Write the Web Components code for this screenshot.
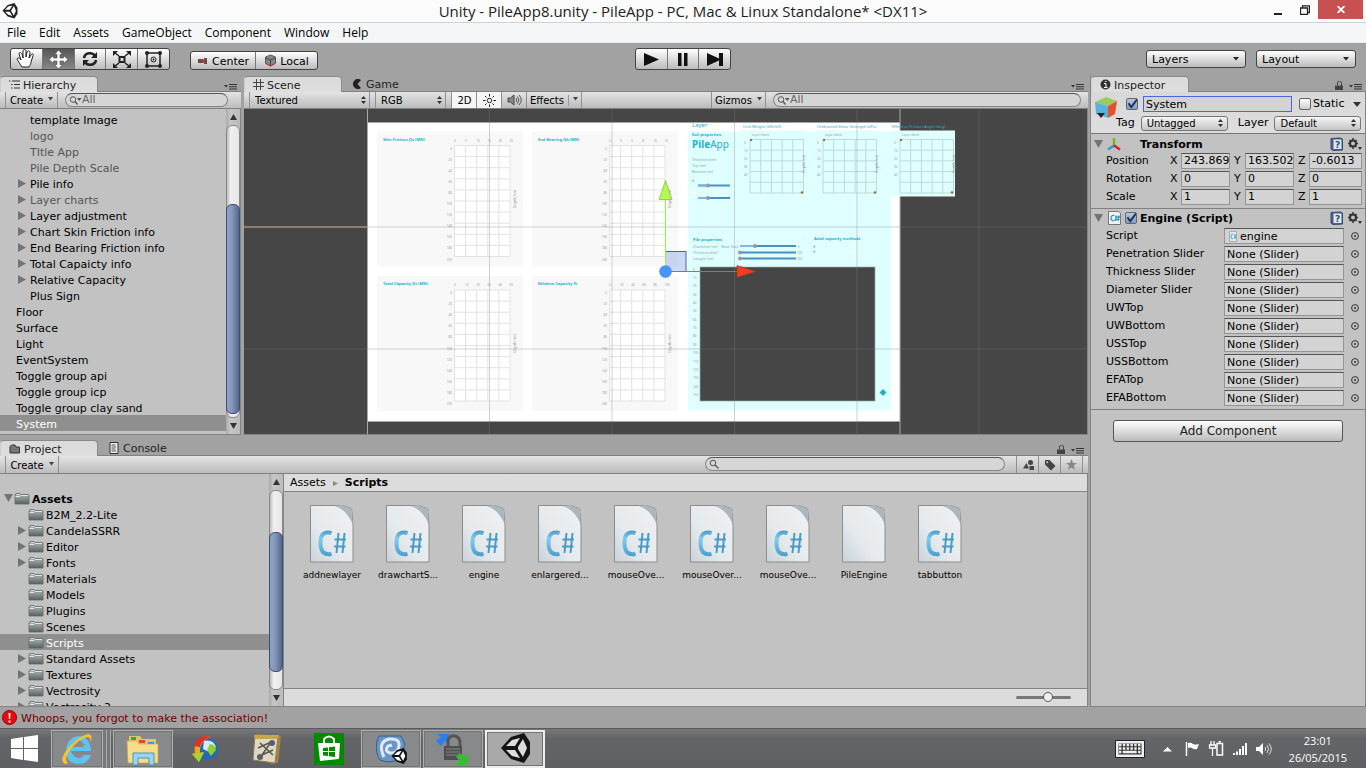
<!DOCTYPE html>
<html lang="en">
<head>
<meta charset="utf-8">
<title>Unity - PileApp8.unity</title>
<style>
html,body{margin:0;height:100%}
body{font:11px/16px "DejaVu Sans",Verdana,sans-serif;color:#000;background:#a2a2a2;overflow:hidden}
</style>
</head>
<body>
<unity-editor></unity-editor>
<script>
const base = `*{box-sizing:border-box}
button,select,input{font:inherit;color:inherit;margin:0;padding:0;border:0;background:none;border-radius:0;outline:0;appearance:none;-webkit-appearance:none;min-width:0}
button{display:flex;align-items:center;white-space:nowrap}
svg{display:block;flex:none}
.lb{padding-top:2px}
:host([hidden]){display:none}`;

function define(name, css, html) {
  customElements.define(name, class extends HTMLElement {
    connectedCallback() {
      if (this.shadowRoot) return;
      const root = this.attachShadow({ mode: 'open' });
      root.innerHTML = `<style>${base}${css}</style>` + (typeof html === 'function' ? html(this) : html);
    }
  });
}
const svg = (w, h, body, vb) => `<svg width="${w}" height="${h}" viewBox="${vb || `0 0 ${w} ${h}`}" aria-hidden="true">${body}</svg>`;
const unityShape = (line, face) => `<path fill="${line}" d="M1 15 11 4 24 0 30 9 30 21 24 30 11 26Z"/><path fill="${face}" d="M6 13 12 7 20 5 15 13ZM6 17 15 17 20 25 12 23ZM18 14 23 6 27 15 23 24 18 16Z"/>`;

const icons = {
  unity: svg(16, 16, unityShape('#222', '#fff'), '0 0 31 31'),
  hand: svg(20, 20, '<path d="M6 18C4 15 2 12 1 10c1-2 3-1 4 1L3 5c0-2 2-2 3 0l1 4V2c0-2 3-2 3 0v6l1-5c1-2 3-1 3 1l-1 5 2-3c1-2 3-1 2 1l-2 6c0 2-1 3-2 5Z" fill="#fff" stroke="#222"/>'),
  move: svg(19, 19, '<path fill="#fff" stroke="#444" stroke-width=".6" d="m9.500 0 4 4.500H11V8h3.500V5.500l4.500 4-4.500 4V11H11v3.500h2.500l-4 4.500-4-4.500H8V11H4.500v2.500L0 9.500l4.500-4V8H8V4.500H5.500Z"/>'),
  rotate: svg(16, 16, '<path d="M2 7C3 1 11 1 13 5M14 9C13 15 5 15 3 11" fill="none" stroke="#222" stroke-width="2.600"/><path d="M15 1v6H9ZM1 15V9h6Z" fill="#222"/>'),
  scale: svg(18, 17, '<path d="M6.500 6h5v5h-5z" fill="none" stroke="#222" stroke-width="2"/><path d="M2 2l4 3M16 2l-4 3M2 15l4-3M16 15l-4-3" stroke="#222" stroke-width="1.500"/><path d="M0 0h5L0 5ZM18 0v5l-5-5ZM0 17v-5l5 5ZM18 17h-5l5-5Z" fill="#222"/>'),
  rect: svg(17, 17, '<path d="M2 2h13v13H2z" fill="none" stroke="#222" stroke-width="1.500"/><g fill="#222"><circle cx="2" cy="2" r="2"/><circle cx="15" cy="2" r="2"/><circle cx="2" cy="15" r="2"/><circle cx="15" cy="15" r="2"/><circle cx="8.500" cy="8.500" r="1"/></g><circle cx="8.500" cy="8.500" r="2.500" fill="none" stroke="#222"/>'),
  pivot: svg(12, 10, '<path fill="#555" d="M1 3h5v4H1zM7 2h3v6H7z"/><circle cx="6" cy="5" r="1.800" fill="#d22"/>'),
  cube: svg(13, 13, '<path fill="#888" stroke="#555" d="m6.500 1 5 2v6l-5 3-5-3V3Z"/><path d="m2 4 4.500 2L11 4M6.500 6v6" stroke="#444" fill="none"/><path d="M1.500 9.500 6.500 12l5-2.500" stroke="#c33" fill="none"/>'),
  play: svg(15, 13, '<path fill="#111" d="M0 0l15 6.500L0 13Z"/>'),
  pause: svg(10, 13, '<path fill="#111" d="M0 0h3.500v13H0zM6 0h3.500v13H6z"/>'),
  step: svg(16, 13, '<path fill="#111" d="M0 0l12 5.500V0h4v13h-4V7.500L0 13Z"/>'),
  list: svg(11, 9, '<path d="M0 1h1.500M3 1h8M2 4.500h1.500M5 4.500h6M2 8h1.500M5 8h6" stroke="#333"/>'),
  grid: svg(11, 11, '<path d="M3.500 0v11M7.500 0v11M0 3.500h11M0 7.500h11" stroke="#444"/>'),
  game: svg(9, 10, '<path fill="#222" d="M8 1A5 5 0 1 0 8 9L4.500 5Z"/>'),
  info: svg(11, 11, '<circle cx="5.500" cy="5.500" r="5" fill="#333"/><path d="M4 4.500h2v4M4 8.500h3.500M5 2.500h1.500" stroke="#fff" fill="none"/>'),
  foldertab: svg(12, 10, '<path d="M1 9V2.500L2.500 1H6l1 2h3.500v6Z" fill="#777" stroke="#333"/>'),
  console: svg(10, 12, '<path d="M1 .5h8v11H1z" fill="#eee" stroke="#333"/><path d="M2.500 3h4M2.500 5h4.500M2.500 7h4M2.500 9h4.500" stroke="#555"/>'),
  menu: svg(13, 6, '<path fill="#333" d="M0 1h4L2 3.500ZM5 0h8v1H5zM5 2.300h8v1H5zM5 4.600h8v1H5z"/>'),
  lock: svg(8, 9, '<path d="M2.500 4V2a1.800 1.800 0 0 1 4 0v3" fill="none" stroke="#444"/><path fill="#444" d="M0 4.500h8V9H0z"/>'),
  sun: svg(13, 13, '<circle cx="6.500" cy="6.500" r="2.200" fill="none" stroke="#222"/><path d="M6.500 0v2.500M6.500 10.500V13M0 6.500h2.500M10.500 6.500H13M2 2l1.500 1.500M9.500 9.500 11 11M11 2 9.500 3.500M2 11l1.500-1.500" stroke="#222"/>'),
  audio: svg(15, 12, '<path d="M1 4h2.500L7 1v10L3.500 8H1Z" fill="#888" stroke="#444"/><path d="M9 4q1.500 2 0 4M10.500 2.500q3 3.500 0 7M12 1q4.500 5 0 10" fill="none" stroke="#555"/>'),
  find: svg(10, 10, '<circle cx="4" cy="4" r="2.800" fill="none" stroke="#555"/><path d="m6 6 3.500 3.500" stroke="#555" stroke-width="1.300"/>'),
  findmenu: svg(13, 10, '<circle cx="4" cy="4.500" r="2.800" fill="none" stroke="#555"/><path d="m6 6.500 2.500 3" stroke="#555" stroke-width="1.300"/><path fill="#555" d="M8 3h4.500L10.200 6Z"/>'),
  shapes: svg(11, 10, '<circle cx="7.500" cy="2.500" r="2.500" fill="#444"/><path fill="#444" d="M0 8.500 3.500 3 6 8.500ZM6.500 6H11v4H6.500z"/>'),
  tag: svg(12, 12, '<path fill="#444" fill-rule="evenodd" d="M1 1h4.500L11.500 7 7 11.500 1 5.500ZM2.300 3.200a1 1 0 1 0 2 0a1 1 0 1 0-2 0"/>'),
  star: svg(11, 11, '<path fill="#888" d="m5.500 0 1.500 3.900 4 .1-3.200 2.600 1.200 4.200-3.500-2.400L2 10.800l1.200-4.200L0 4l4-.1Z"/>'),
  folder: svg(16, 13, '<defs><linearGradient id="f" x2="0" y2="1"><stop offset="0" stop-color="#a9b0b0"/><stop offset=".5" stop-color="#87908f"/><stop offset="1" stop-color="#56605f"/></linearGradient></defs><path d="M1 12V3q0-1 1-1V1.500h4l1 1h7q1 0 1 1V12Z" fill="url(#f)" stroke="#626a6b" stroke-width=".8"/><path d="M1.500 4.500H6l1-1h7" stroke="#e3e7e7" fill="none"/><path d="M2.500 2.500H6" stroke="#d8dcdc"/>'),
  goCube: svg(24, 26, '<path fill="#9dca5f" d="M1 6 12 1l11 4-9 5Z"/><path fill="#58b2dc" d="m1 6 13 4v12L2 18Z"/><path fill="#e5512a" d="m14 10 9-5-2 13-7 4Z"/><path fill="#222" d="M3 17h8l-4 5Z"/>'),
  transform: svg(14, 13, '<path d="M7 0v8" stroke="#7ab51d" stroke-width="2.500"/><path d="m7 7.500-6 4" stroke="#3497d1" stroke-width="2.500"/><path d="m7 7.500 6 4" stroke="#d3202a" stroke-width="2.500"/>'),
  help: svg(13, 14, '<path fill="#49638c" stroke="#334a70" d="M1 1.500 10 1l2.500 1v11L3 13.500 1 12Z"/><path fill="#dfe6ee" d="M3.500 2.500h8v9.500h-8z"/><text x="5" y="10.500" font-size="9" font-weight="700" font-family="DejaVu Sans" fill="#2c4a78">?</text>'),
  gear: svg(14, 12, '<circle cx="5" cy="5.500" r="3" fill="none" stroke="#333" stroke-width="2"/><path d="M5 0v2M5 9v2M0 5.500h2M8 5.500h2M1.500 2 3 3.500M7 7.500 8.500 9M8.500 2 7 3.500M3 7.500 1.500 9" stroke="#333" stroke-width="1.500"/><path fill="#333" d="M10 9h4l-2 3Z"/>'),
  csSmall: svg(13, 14, '<path d="M.5.5h10L12.500 2v11.500H.5Z" fill="#eef2f5" stroke="#777"/><path d="M6.500 4.500Q3 4 3 7t3.500 3M8.500 4.500 7.500 10M11 4.500 10 10M7 6.200h5M6.500 8.500h5" fill="none" stroke="#2f90c4" stroke-width="1.200"/>'),
  ring: svg(8, 8, '<circle cx="4" cy="4" r="3.400" fill="none" stroke="#333"/><circle cx="4" cy="4" r="1" fill="#333"/>')
};
const caret = svg(6, 4, '<path fill="#222" d="M0 0h6L3 3.500Z"/>');

define('u-icon', `:host{display:inline-flex;flex:none}`, el => icons[el.getAttribute('name')]);

define('title-bar', `:host{display:grid;grid-template-columns:110px 1fr 110px;height:23px;background:#fcfcfc;border-bottom:1px solid #d0d3d6;font:15px/22px "Open Sans",sans-serif;color:#222}
.logo{padding:3px 2px}.t{text-align:center;white-space:nowrap}.w{display:flex;justify-content:flex-end;padding-right:3px}
.w button{height:19px;width:27px;justify-content:center}.w .x{width:45px;background:#c75050}`,
`<div class="logo">${icons.unity}</div><div class="t">Unity - PileApp8.unity - PileApp - PC, Mac &amp; Linux Standalone* &lt;DX11&gt;</div>
<div class="w"><button aria-label="Minimize">${svg(8, 10, '<path d="M0 8h8v2H0z" fill="#222"/>')}</button><button aria-label="Restore">${svg(10, 10, '<path d="M.5 3h7v6.500h-7zM2.500 3V.8h7V7.500H8" fill="none" stroke="#222" stroke-width="1.300"/>')}</button><button class="x" aria-label="Close">${svg(8, 7, '<path d="m.5 0 7 7M7.500 0l-7 7" stroke="#fff" stroke-width="1.800"/>')}</button></div>`);

define('menu-bar', `:host{display:flex;height:20px;background:#f5f6f7;border-bottom:1px solid #e8e9ea;font:12px/19px "Open Sans",sans-serif;padding-left:7px;gap:13px}`,
  ['File', 'Edit', 'Assets', 'GameObject', 'Component', 'Window', 'Help'].map(t => `<button>${t}</button>`).join(''));

define('tool-bar', `:host{display:grid;grid-template-columns:1fr auto 1fr;height:32px;padding:0 10px}
.g{display:flex;border:1px solid #444;border-radius:3px;overflow:hidden;background:linear-gradient(#fff,#bbb)}
.g button{justify-content:center;border-left:1px solid #777}.g button:first-child{border:0}
.tools{height:22px;width:160px}.tools button{flex:1}.tools .on{background:linear-gradient(#555,#888)}
.left,.right{display:flex;align-items:flex-start;padding-top:5px}
.piv{height:19px;margin:3px 0 0 20px}.piv button{gap:3px;padding:0 4px;width:64px}.piv button+button{width:62px}
.play{height:22px;width:96px;margin-top:5px}.play button{flex:1}
.right{justify-content:flex-end;gap:10px;padding-top:7px}
label{position:relative;width:100px;height:18px}
select{width:100%;height:18px;border:1px solid #444;border-radius:3px;background:linear-gradient(#fff,#bbb);padding:1px 0 0 5px;font-size:11px}
label svg{position:absolute;right:7px;top:7px}`,
`<div class="left"><div class="g tools">${['hand', 'move', 'rotate', 'scale', 'rect'].map(n => `<button aria-label="${n}" class="${n === 'move' ? 'on' : ''}">${icons[n]}</button>`).join('')}</div>
<div class="g piv"><button>${icons.pivot}<span class="lb">Center</span></button><button>${icons.cube}<span class="lb">Local</span></button></div></div>
<div class="g play"><button aria-label="Play">${icons.play}</button><button aria-label="Pause">${icons.pause}</button><button aria-label="Step">${icons.step}</button></div>
<div class="right">${['Layers', 'Layout'].map(t => `<label><select aria-label="${t}"><option>${t}</option></select>${caret}</label>`).join('')}</div>`);

define('dock-panel', `:host{display:flex;flex-direction:column;min-width:0;min-height:0}
.tabs{display:flex;height:17px;padding-top:1px;border-bottom:1px solid #808080}
.opt{margin-left:auto;display:flex;align-items:flex-end;gap:6px;padding:0 4px 1px 0}
.body{flex:1;min-height:0;display:flex;background:#c2c2c2;border-right:1px solid #848484;border-bottom:1px solid #848484}`,
el => `<div class="tabs"><slot name="tab"></slot><div class="opt">${el.hasAttribute('lock') ? icons.lock : ''}${icons.menu}</div></div><slot name="bar"></slot><div class="body"><slot></slot></div>`);

define('dock-tab', `:host{display:block;width:98px;height:15px}
button{width:100%;height:16px;gap:4px;padding-left:11px;color:#222;font-size:11px}
:host([active]) button{padding-left:8px;gap:3px;background:linear-gradient(#dadada,#dedede);border:1px solid #8a8a8a;border-bottom:0;border-left-color:#ccc;border-radius:4px 4px 0 0}`,
el => `<button role="tab">${icons[el.getAttribute('icon')]}<span class="lb"><slot></slot></span></button>`);

define('strip-bar', `:host{display:flex;height:17px;background:linear-gradient(#e4e4e4,#bcbcbc);border-bottom:1px solid #808080;padding-left:5px;align-items:stretch;font-size:10px;flex:none}
:host([tall]){height:18px}`, `<slot></slot>`);

define('strip-button', `:host{display:flex;border-left:1px solid #909090;margin-right:-1px}
button{width:100%;padding:0 5px;gap:5px;font-size:10px;justify-content:center}
:host([end]) {border-right:1px solid #909090;margin-right:0}
:host([on]) button{background:#f6f6f6}:host([split]) button{gap:4px}`,
el => `<button aria-label="${el.getAttribute('label') || el.textContent}">${el.getAttribute('icon') ? icons[el.getAttribute('icon')] : '<span class="lb"><slot></slot></span>'}${el.hasAttribute('split') ? svg(1, 11, '<path fill="#999" d="M0 0h1v11H0z"/>') : ''}${el.hasAttribute('drop') ? svg(5, 8, '<path fill="#444" d="M0 1h5L2.500 4.500Z"/>') : ''}</button>`);

define('strip-select', `:host{display:block;position:relative;border:solid #909090;border-width:0 1px}
select{width:100%;height:16px;padding:1px 0 0 5px;font-size:10px}svg{position:absolute;right:3px;top:4px}`,
el => `<select aria-label="${el.getAttribute('value')}"><option>${el.getAttribute('value')}</option></select>${svg(5, 8, '<path fill="#333" d="M0 3 2.500 0 5 3ZM0 5h5L2.500 8Z"/>')}`);

define('search-box', `:host{display:flex;align-items:center;height:14px;margin-top:1px;border:1px solid #858585;border-top-color:#555;border-radius:7px;background:#d6d6d6;padding-left:3px;overflow:hidden}
input{flex:1;height:12px;font-size:11px;line-height:12px}input::placeholder{color:#666;opacity:1}`,
el => `${el.hasAttribute('plain') ? icons.find : icons.findmenu}<input type="text" aria-label="Search" placeholder="${el.getAttribute('text') || ''}">`);

define('scroll-bar', `:host{display:flex;flex-direction:column;flex:none;width:14px;background:linear-gradient(90deg,#aaa,#c6c6c6 30%,#bbb)}
.b{height:16px;display:flex;align-items:center;justify-content:center}
.t{flex:1;display:flex;flex-direction:column;background:linear-gradient(90deg,#bbb,#f0f0f0 30%,#e6e6e6);border-radius:6px;border:1px solid #888}
.th{border-radius:6px;border:1px solid #3e4d70;background:linear-gradient(90deg,#91a1c4,#8597bb 40%,#56678c);margin:0 -1px}`,
el => { const [a, b, c] = el.getAttribute('split').split(' ');
  return `<button class="b" aria-label="Scroll up">${svg(7, 6, '<path fill="#333" d="M0 6 3.500 0 7 6Z"/>')}</button><div class="t"><div style="flex:${a}"></div><div class="th" style="flex:${b}"></div><div style="flex:${c}"></div></div><button class="b" aria-label="Scroll down">${svg(7, 6, '<path fill="#333" d="M0 0h7L3.500 6Z"/>')}</button>`; });

define('tree-row', `:host{display:flex;align-items:center;height:16px;line-height:16px;font-size:11px;white-space:nowrap;gap:2px;padding-left:2px;flex:none}
:host([in]){padding-left:16px}:host([dim]){color:#555}:host([sel]){background:#8f8f8f;color:#fff}:host([bold]){font-weight:700}
.a{width:12px;display:flex;justify-content:center}:host([folder]){gap:0}u-icon{margin-right:2px}.lb{padding-top:3px}`,
el => `<span class="a">${el.hasAttribute('closed') ? svg(8, 9, '<path fill="#747474" d="M0 0 8 4.500 0 9Z"/>') : el.hasAttribute('open') ? svg(9, 8, '<path fill="#747474" d="M0 0h9L4.500 8Z"/>') : ''}</span>${el.hasAttribute('folder') ? '<u-icon name="folder"></u-icon>' : ''}<span class="lb"><slot></slot></span>`);

const rows = (list, extra) => list.split('|').map(s => { const [t, a = ''] = s.split('~'); return `<tree-row ${extra || ''} ${a}>${t}</tree-row>`; }).join('');

define('hierarchy-panel', `:host{display:flex;min-width:0;min-height:0}dock-panel{flex:1}.l{flex:1;padding-top:2px;overflow:hidden;display:flex;flex-direction:column}
search-box{width:163px;margin-left:7px}strip-button{width:53px}`,
`<dock-panel><dock-tab slot="tab" active icon="list">Hierarchy</dock-tab>
<strip-bar slot="bar"><strip-button drop end>Create</strip-button><search-box text="All"></search-box></strip-bar>
<div class="l" role="tree">${rows('template Image~in|logo~in dim|TItle App~in dim|Pile Depth Scale~in dim|Pile info~in closed|Layer charts~in closed dim|Layer adjustment~in closed|Chart Skin Friction info~in closed|End Bearing Friction info~in closed|Total Capaicty info~in closed|Relative Capacity~in closed|Plus Sign~in|Floor|Surface|Light|EventSystem|Toggle group api|Toggle group icp|Toggle group clay sand|System~sel')}</div>
<scroll-bar split="79 211 3"></scroll-bar></dock-panel>`);

function lines(x0, y0, nx, ny, s, c) {
  let d = '';
  for (let i = 0; i <= nx; i++) d += `M${x0 + i * s} ${y0}v${ny * s}`;
  for (let i = 0; i <= ny; i++) d += `M${x0} ${y0 + i * s}h${nx * s}`;
  return `<path d="${d}" stroke="${c}" fill="none"/>`;
}
function chart(x, y, title, ticks) {
  let s = `<rect x="${x}" y="${y}" width="146" height="135" fill="#f8f8f8"/><text class="h" x="${x + 6}" y="${y + 9}">${title}</text><rect x="${x + 77.5}" y="${y + 14}" width="55.500" height="111" fill="#fff"/>` + lines(x + 77.5, y + 14, 5, 10, 11.1, '#e3e3e3');
  ticks.forEach((t, i) => s += `<text class="n" x="${x + 77 + i * 11.1}" y="${y + 10}">${t}</text>`);
  for (let i = 0; i <= 10; i++) s += `<text class="n e" x="${x + 75}" y="${y + 18 + i * 11.1}">${i * 20}</text>`;
  return s + `<text class="n d" transform="translate(${x + 139} ${y + 77}) rotate(-90)">Depth (m)</text>`;
}
function mini(x) {
  let s = `<rect x="${x - 9}" y="131" width="64" height="66" fill="#e0ffff"/>` + lines(x, 140, 5, 5, 10.7, '#bfd9d9') + `<text class="n" x="${x + 2}" y="136.500">Layer charts</text>`;
  for (let i = 0; i < 5; i++) s += `<text class="n" x="${x - 6}" y="${144 + i * 8}">${i * 10}</text>`;
  return s + `<circle cx="${x + 1}" cy="140.500" r="1.200" fill="#8b7345"/><circle cx="${x + 52}" cy="193" r="1.300" fill="#8b7345"/><text class="n d" transform="translate(${x + 55} 174) rotate(-90)">Depth (m)</text>`;
}
const slide = (x, y, w, k) => `<path d="M${x} ${y}h${w}" stroke="#4b8fc0" stroke-width="2"/><path d="M${x} ${y}h${k}" stroke="#7fb8e4" stroke-width="2"/><circle cx="${x + k}" cy="${y}" r="2" fill="#999"/>`;

define('scene-view', `:host{display:block;flex:1;min-width:0;background:#464646;overflow:hidden}svg{width:100%;height:100%}
text{font-family:"Noto Sans",sans-serif;font-size:4px}.h{fill:#26aed4;font-weight:700}.n{fill:#999;font-size:3px}.e{text-anchor:end}.d{font-size:4px}.c{fill:#26aed4}.m{fill:#8aa;font-size:4px}`,
() => {
  let s = `<rect x="367" y="123" width="533" height="299" fill="#fff"/><path d="M367.500 109v326M900 109v326" stroke="#aaa"/>`;
  s += chart(377, 132, 'Skin Friction Qs (MN)', [0, 5, 10, 15, 20, 25]) + chart(532, 132, 'End Bearing Qb (MN)', [0, 3, 5, 8, 10, 13]) + chart(377, 276.5, 'Total Capacity Qt (MN)', [0, 10, 20, 30, 40, 50]) + chart(532, 276.5, 'Relative Capacity %', [0, 20, 40, 60, 80, 100]);
  s += `<rect x="688" y="132" width="203" height="279" fill="#e0ffff"/>` + mini(750) + mini(823) + mini(900);
  s += `<text class="c" x="692" y="127.500" style="font-size:6px">Layer</text><text class="c" x="743" y="128">Unit Weight (kN/m3)</text><text class="c" x="817" y="128">Undrained Shear Strength (kPa)</text><text class="c" x="892" y="128">Effective Friction Angle (deg)</text>
  <text class="h" x="692" y="136">Soil properties</text><text class="c" x="692" y="148" style="font-size:10px"><tspan font-weight="700">Pile</tspan>App</text>
  <text class="m" x="692" y="161">Thickness(m)</text><text class="m" x="692" y="167">Top (m)</text><text class="m" x="692" y="173">Bottom (m)</text>`;
  s += slide(698, 186, 32, 10) + slide(698, 198.5, 32, 10) + '<path d="m692 181 1 1 1-2" stroke="#777" fill="none" stroke-width=".7"/><circle cx="693" cy="192.500" r="1.500" fill="#fff"/>';
  s += `<text class="h" x="693" y="241.500">Pile properties</text><text class="m" x="693" y="248">Diameter (m)</text><text class="m" x="721" y="248">New Text</text><text class="m" x="693" y="254">Thickness(m)</text><text class="m" x="693" y="260">Length (m)</text>` + slide(740, 246.5, 56, 15) + slide(740, 253, 56, 0) + slide(740, 259, 56, 0);
  s += `<text class="n" x="798" y="248">5</text><text class="n" x="797" y="254">100</text><text class="n" x="797" y="260">250</text><text class="h" x="814" y="240.500">Axial capacity methods</text><path d="m813 247 1 1 1-2m-2 6 1 1 1-2" stroke="#777" fill="none" stroke-width=".7"/><circle cx="853" cy="247" r="1.500" fill="#fff"/><circle cx="853" cy="252" r="1.500" fill="#fff"/>`;
  for (let i = 0; i < 16; i++) s += `<text class="n" x="693" y="${271 + i * 8.37}">${i * 10}</text>`;
  s += `<rect x="700" y="267.500" width="175" height="134" fill="#464646" stroke="#9aa" stroke-width=".7"/><path d="m883 389.500 3.500 3.500-3.500 3.500-3.500-3.500Z" fill="#1fb0d0"/>`;
  s += `<path d="M489.500 109v326M612 109v326M734.500 109v326M857 109v326M979 109v326M367 227.500h720M244 349.500h843" stroke="#808080" stroke-opacity=".35"/><path d="M244 227.500h123" stroke="#d5b68c"/>`;
  s += `<rect x="665.500" y="252" width="20.500" height="20" fill="#4a6ee0" fill-opacity=".28" stroke="#3c62c8"/><path d="M665.500 200v68" stroke="#9cf04a"/><path d="m665.500 181 6.500 19h-13Z" fill="#b1fb50" stroke="#7ba63a" stroke-width=".6"/><path d="M672 272h66" stroke="#e8543c"/><path d="m756 272-19 6v-12Z" fill="#ee4020" stroke="#9a3020" stroke-width=".6"/><circle cx="665.500" cy="272" r="6.300" fill="#4795fa"/>`;
  return `<svg viewBox="244 109 843 326" preserveAspectRatio="xMidYMid slice">${s}</svg>`;
});

define('scene-panel', `:host{display:flex;min-width:0;min-height:0}dock-panel{flex:1}
.tx{width:121px}.rgb{width:71px;margin:0 5px}.sp{flex:1}.s{width:308px;margin:1px 7px 0 7px}.w1{width:26px}.w2{width:26px}.w3{width:56px}.w4{width:55px}`,
`<dock-panel><dock-tab slot="tab" active icon="grid">Scene</dock-tab><dock-tab slot="tab" icon="game">Game</dock-tab>
<strip-bar slot="bar"><strip-select class="tx" value="Textured"></strip-select><strip-select class="rgb" value="RGB"></strip-select><strip-button class="w1" on>2D</strip-button><strip-button class="w2" on icon="sun" label="Lighting"></strip-button><strip-button class="w2" icon="audio" label="Audio"></strip-button><strip-button class="w3" drop end split>Effects</strip-button><span class="sp"></span><strip-button class="w4" drop end>Gizmos</strip-button><search-box class="s" text="All"></search-box></strip-bar>
<scene-view></scene-view></dock-panel>`);

define('asset-item', `:host{display:flex;flex-direction:column;align-items:center;width:76px;font-size:9px;line-height:12px;gap:6px;white-space:nowrap}`,
el => svg(44, 58, `<defs><linearGradient id="g" x1="1" y1="0" x2="0" y2="1"><stop offset="0" stop-color="#f0f1f4"/><stop offset=".6" stop-color="#e6eaed"/><stop offset="1" stop-color="#c9d3da"/></linearGradient><linearGradient id="h" gradientUnits="userSpaceOnUse" x1="0" y1="26" x2="0" y2="51"><stop offset="0" stop-color="#4d9cc6"/><stop offset=".3" stop-color="#84cbea"/><stop offset="1" stop-color="#4b9fcb"/></linearGradient></defs><path d="M.5.500h25q10 0 16 3 1 8 1.500 17v36.500H.5Z" fill="url(#g)" stroke="#8d8d8d"/><path d="M25 1q12 4 17.500 18L41.500 3.500Q34 1 25 1Z" fill="#a9b7c0"/>${el.hasAttribute('blank') ? '' : '<g fill="none"><path d="M21.500 28Q10.500 25 10.500 38T21.500 49" stroke="url(#h)" stroke-width="4"/><path d="M28.500 28 26.500 48M34.500 28 32.500 48M24.500 34.500h11.500M24 41.500h11.500" stroke="#469bc8" stroke-width="2"/></g>'}`) + '<slot></slot>');

define('project-panel', `:host{display:flex;min-width:0;min-height:0}dock-panel{flex:1}
.tree{width:269px;flex:none;padding-top:16px;overflow:hidden;display:flex;flex-direction:column;min-height:0}
.r{flex:1;display:flex;flex-direction:column;min-width:0;border-left:1px solid #848484}
.crumb{height:18px;background:#dcdcdc;border-bottom:1px solid #848484;display:flex;align-items:center;gap:7px;padding:1px 0 0 6px}
.g{flex:1;display:flex;flex-wrap:wrap;align-content:flex-start;padding:13px 0 0 10px}
.f{height:18px;background:#dcdcdc;border-top:1px solid #848484;display:flex;justify-content:flex-end;align-items:center;padding-right:16px}
a{color:inherit;text-decoration:none}
input{width:55px;height:12px}input::-webkit-slider-runnable-track{height:3px;background:#777;border-radius:2px}
input::-webkit-slider-thumb{-webkit-appearance:none;width:10px;height:10px;margin-top:-4px;border-radius:50%;border:1px solid #555;background:#eee}
.s{width:300px;margin:1px 11px 0 auto}.i{width:23px}.e{margin-right:5px}strip-button.c{width:54px}`,
`<dock-panel lock><dock-tab slot="tab" active icon="foldertab">Project</dock-tab><dock-tab slot="tab" icon="console">Console</dock-tab>
<strip-bar slot="bar" tall><strip-button class="c" drop end>Create</strip-button><search-box class="s" plain></search-box><strip-button class="i" icon="shapes" label="Search by type"></strip-button><strip-button class="i" icon="tag" label="Search by label"></strip-button><strip-button class="i e" end icon="star" label="Save search"></strip-button></strip-bar>
<div class="tree" role="tree">${rows('Assets~bold open|B2M_2.2-Lite~in|CandelaSSRR~in closed|Editor~in closed|Fonts~in closed|Materials~in|Models~in|Plugins~in|Scenes~in|Scripts~in sel|Standard Assets~in closed|Textures~in closed|Vectrosity~in closed|Vectrosity 2~in closed', 'folder')}</div>
<scroll-bar split="41 139 17"></scroll-bar>
<div class="r"><nav class="crumb"><a href="#assets">Assets</a>${svg(5, 5, '<path fill="#888" d="m0 0 5 2.500L0 5Z"/>')}<b>Scripts</b></nav>
<div class="g"><asset-item>addnewlayer</asset-item><asset-item>drawchartS...</asset-item><asset-item>engine</asset-item><asset-item>enlargered...</asset-item><asset-item>mouseOve...</asset-item><asset-item>mouseOver...</asset-item><asset-item>mouseOve...</asset-item><asset-item blank>PileEngine</asset-item><asset-item>tabbutton</asset-item></div>
<div class="f"><input type="range" aria-label="Icon size" min="0" max="100" value="59"></div></div></dock-panel>`);

const checkCss = `input[type=checkbox]{width:12px;height:12px;flex:none;border:1px solid #666;border-radius:2px;background:linear-gradient(#fff,#ccc)}
input[type=checkbox]:checked{background:url('data:image/svg+xml,<svg xmlns="http://www.w3.org/2000/svg" viewBox="0 0 12 12"><path d="m2 5 3 4 6-8" fill="none" stroke="%23203050" stroke-width="2"/></svg>') center/11px no-repeat,linear-gradient(#b5c6e2,#839cc8)}`;

define('component-head', `:host{display:flex;align-items:center;height:18px;padding:0 3px 0 3px;font-weight:700;font-size:11px;gap:4px}
.a{display:flex}.i{display:flex;width:14px;justify-content:center}.t{margin-left:-1px;padding-top:2px}:host([wide]) .t{margin-left:15px}.r{margin-left:auto;display:flex;gap:5px;align-items:center}${checkCss}`,
el => `<span class="a">${svg(9, 8, '<path fill="#747474" d="M0 0h9L4.500 8Z"/>')}</span><span class="i">${icons[el.getAttribute('icon')]}</span>${el.hasAttribute('check') ? '<input type="checkbox" checked aria-label="Enabled">' : ''}<span class="t"><slot></slot></span><span class="r">${icons.help}${icons.gear}</span>`);

define('vector-row', `:host{display:grid;grid-template-columns:64px 1fr 1fr 1fr;height:18px;align-items:center;padding:0 3px 0 15px}
label{display:grid;grid-template-columns:11px 1fr;align-items:center;padding-right:4px}label:last-child{padding-right:0}
input{width:100%;height:16px;border:1px solid #949494;border-top-color:#555;background:#d3d3d3;padding-left:2px;font-size:11px}`,
el => `<span><slot></slot></span>` + el.getAttribute('v').split(' ').map((v, i) => `<label>${'XYZ'[i]}<input type="text" value="${v}"></label>`).join(''));

define('object-row', `:host{display:grid;grid-template-columns:118px 1fr 8px;height:18px;align-items:center;padding:0 6px 0 15px}
button{height:16px;border:1px solid #949494;border-top-color:#555;background:#d3d3d3;padding-left:2px;gap:1px;margin-right:7px;font-size:11px}.o{border:0;background:none;padding:0;margin:0}.n{white-space:nowrap}.lb{padding-top:1px}`,
el => `<span class="n"><slot></slot></span><button>${el.hasAttribute('script') ? svg(12, 11, '<path d="M2.500.5h7v10h-7z" fill="#e2e9ee" stroke="#aab"/><path d="M6 3Q4 3 4 5.500T6 8M8 3v5M7 4.500h2M7 6.500h2" stroke="#4aa3d2" fill="none"/>') : ''}<span class="lb">${el.hasAttribute('script') ? 'engine' : 'None (Slider)'}</span></button><button class="o" aria-label="Select object">${icons.ring}</button>`);

define('inspector-panel', `:host{display:flex;min-width:0;min-height:0;border-left:1px solid #848484;background:#a2a2a2}dock-panel{flex:1}
.b{flex:1;min-width:0}
.h{height:42px;background:linear-gradient(#d8d8d8,#dedede);border-bottom:1px solid #777;display:grid;grid-template-columns:32px 1fr;padding:4px 4px 0 3px}
.n{display:flex;align-items:center;height:16px;gap:5px}.n .nm{flex:1;height:16px;border:1px solid #4a66d8;background:#d3d3d3;padding:1px 0 0 2px;margin-right:2px}
.n label{display:flex;align-items:center;gap:2px}.n svg{margin:0 1px 0 4px}
.t{display:flex;align-items:center;justify-content:space-between;height:16px;margin:3px 1px 0 -10px}.t label{display:flex;gap:6px;position:relative;align-items:center}
select{width:87px;height:15px;border:1px solid #777;border-radius:3px;background:linear-gradient(#f5f5f5,#c5c5c5);padding-left:5px;font-size:10px;line-height:13px}.t svg{position:absolute;right:5px;top:4px}
.s{border-bottom:1px solid #808080;padding-bottom:2px}.tr{height:75px;padding-top:1px}.tr vector-row:nth-of-type(1){margin-top:-1px}
.add{margin:10px auto 0;width:230px;height:22px;justify-content:center;border:1px solid #555;border-radius:3px;background:linear-gradient(#fff,#bbb);font-size:12px;color:#222}${checkCss}`,
`<dock-panel lock><dock-tab slot="tab" active icon="info">Inspector</dock-tab><div class="b">
<div class="h">${icons.goCube}<div><div class="n"><input type="checkbox" checked aria-label="Active"><input class="nm" type="text" value="System" aria-label="Name"><label><input type="checkbox">Static</label>${svg(8, 5, '<path fill="#333" d="M0 0h8L4 5Z"/>')}</div>
<div class="t"><label>Tag<select><option>Untagged</option></select>${svg(5, 8, '<path fill="#333" d="M0 3 2.500 0 5 3ZM0 5h5L2.500 8Z"/>')}</label><label>Layer<select><option>Default</option></select>${svg(5, 8, '<path fill="#333" d="M0 3 2.500 0 5 3ZM0 5h5L2.500 8Z"/>')}</label></div></div></div>
<div class="s tr"><component-head icon="transform" wide>Transform</component-head><vector-row v="243.869 163.502 -0.6013">Position</vector-row><vector-row v="0 0 0">Rotation</vector-row><vector-row v="1 1 1">Scale</vector-row></div>
<div class="s"><component-head icon="csSmall" check>Engine (Script)</component-head><object-row script>Script</object-row>${['Penetration Slider', 'Thickness Slider', 'Diameter Slider', 'UWTop', 'UWBottom', 'USSTop', 'USSBottom', 'EFATop', 'EFABottom'].map(t => `<object-row>${t}</object-row>`).join('')}</div>
<button class="add">Add Component</button></div></dock-panel>`);

define('status-bar', `:host{display:flex;align-items:center;height:21px;gap:4px;padding-left:2px;color:#6d0000;font-size:11px}.lb{padding-top:3px}`,
`${svg(15, 15, '<circle cx="7.500" cy="7.500" r="7" fill="#e50d0d" stroke="#900"/><path d="M6.500 3h2l-.4 6h-1.200zM6.500 10.500h2v2h-2z" fill="#fff"/>')}<span class="lb">Whoops, you forgot to make the association!</span>`);

const apps = {
  start: svg(28, 28, '<path fill="#fff" d="m0 4 12-2v11H0ZM13 2l14-2v13H13ZM0 14h12v11L0 23ZM13 14h14v13l-14-2Z"/>'),
  ie: svg(34, 34, '<path d="M27 13H12q2-5 6-5 4 0 5 4M28 19H12q1 7 7 7 3 0 5-3h7q-4 10-13 9Q6 31 6 19 7 5 19 4q11 1 12 15Z" fill="#5cc3f2" fill-rule="evenodd"/><path d="M12 15q1-5 6-5t6 5Z" fill="#8b8b8d"/><path d="M11 19h20v3H12Z" fill="#85868a"/><path d="M5 32Q-1 29 6 19 16 5 28 2q6 1 2 9 2-6-3-6-8 2-16 12Q3 27 8 31Z" fill="#f6c52c"/>'),
  folder: svg(34, 34, '<path d="M3 4h11l2 3h14v23H3Z" fill="#e4c36a"/><path d="M5 5h5v3H5z" fill="#2ba84a"/><path d="M13 8h6v3h-6z" fill="#d84a32"/><path d="M22 10h6v3h-6z" fill="#3390dc"/><path d="M1 9h10l2 3h19v19H2Z" fill="#f6dd8b" stroke="#c9a64c" stroke-width=".7"/><path d="M7 33V21h21v12h-5v-7H12v7Z" fill="#9cd4f0" stroke="#4b94bb"/>'),
  orb: svg(28, 28, '<circle cx="16" cy="14" r="11" fill="#2469bc"/><path d="M13 6q9-2 12 6l-7 5-6-3Z" fill="#d9ecf7"/><path d="M19 9q5 0 6 6l-5 6-4-6Z" fill="#8fd22e"/><path d="M20 2Q8 6 9 18l4-1-5 10-7-8 3-1Q2 4 14 1Z" fill="#f2a71c"/><path d="M20 2Q10 5 9 12L3 11Q5 2 14 1Z" fill="#dc3127"/><path d="m1 19 12-2-5 10Z" fill="#a6d52b"/>'),
  notes: svg(32, 32, '<path d="M5 1 30 3 27 30 20 31Z" fill="#a2843a"/><path d="M4 2q12 2 23 1L24 30 2 27Z" fill="#e0d8c1" stroke="#8e7d55"/><path d="M3 2h25l-1 4H4Z" fill="#c9a64e"/><path d="m7 15 13-6-9 13 11-5M9 10l13 12" stroke="#555" stroke-width="1.500" fill="none"/><circle cx="21" cy="10" r="3" fill="#54616b"/><circle cx="9" cy="24" r="3" fill="#54616b"/>'),
  store: svg(30, 32, '<path fill="#008a00" d="M0 0h30v32H0z"/><path d="M10 10V6q5-5 10 0v4" stroke="#fff" stroke-width="2" fill="none"/><path fill="#fff" d="M4 10h22l-1 16-19 2Z"/><path fill="#008a00" d="m9 15 5-.6V18H9Zm6-.7 6-.8V18h-6ZM9 19h5v4l-5-.6Zm6 0h6v5l-6-.8Z"/>'),
  mono: svg(32, 32, '<path d="M4 3h22l4 8-5 15q-10 5-20 1Q0 20 2 8Z" fill="#6b95c3" stroke="#355f91"/><path d="M9 24Q2 9 14 6q11-1 10 7-1 8-9 7-6-2-2-7l4-1" fill="none" stroke="#dceaf7" stroke-width="3"/><g transform="translate(16 15) scale(.53)">' + unityShape('#111', '#fff') + '</g>'),
  lock: svg(34, 34, '<path d="M1 2h12v11L9 9l-4 5-5-5 5-4Z" fill="#2d7df0"/><path d="M12 16V9q1-6 7-5 5 1 5 7v5" fill="none" stroke="#555" stroke-width="3"/><path d="M8 14h18v14H8Z" fill="#4d4f52"/><path d="M10 17h14M10 20h14M10 23h14" stroke="#888"/><path d="M32 33H20l4-4-4-4 4-4 4 4 4-4Z" fill="#39bc32"/>'),
  unity: svg(31, 31, unityShape('#151515', '#ddd'))
};
define('task-button', `:host{display:flex;width:60px;height:38px;margin-right:2px}button{width:100%;justify-content:center}
:host([open]) button{border:1px solid #b0b0b0;background:#88898b;box-shadow:inset 0 0 0 1px #737373}:host([on]) button{border:2px solid #eee;background:#a9a9a9}
:host([stack]){width:52px;margin-right:10px;box-shadow:3px 0 #77787a,4px 0 #aaa,7px 0 #77787a,8px 0 #aaa}`,
el => `<button aria-label="${el.getAttribute('app')}">${apps[el.getAttribute('app')]}</button>`);

define('task-bar', `:host{display:flex;height:40px;align-items:center;background:linear-gradient(#77787a,#636467 25%,#606164);border-top:1px solid #5a5b5d;color:#fff;font:11px/17px "Open Sans",sans-serif}
.tray{margin-left:auto;display:flex;align-items:center;gap:8px;padding-right:19px}.c{text-align:center;margin-left:9px}.st{width:49px}`,
`<task-button class="st" app="start"></task-button><task-button open stack app="ie"></task-button><task-button open app="folder"></task-button><task-button app="orb"></task-button><task-button app="notes"></task-button><task-button app="store"></task-button><task-button open app="mono"></task-button><task-button open app="lock"></task-button><task-button open on app="unity"></task-button>
<div class="tray">${svg(30, 18, '<path d="M.5.5h29v17H.5z" fill="#eee" stroke="#222"/><path d="M3.500 3.500h23v11h-23z" fill="#333"/><path d="M4 5h22M4 8.500h22M4 12h22" stroke="#eee" stroke-width="2.300" stroke-dasharray="2.500 1.300"/><path d="M9 12h12" stroke="#eee" stroke-width="2.300"/>')}
${svg(24, 6, '<path d="M10 5.500h9L14.500 1Z" fill="#fff"/>')}
${svg(15, 15, '<path d="M1.500 1v14" stroke="#fff" stroke-width="1.500"/><path d="M3 2q3-1 5 1 3 1 6 0l-2 5q-3 1-5-1-2-1-4 0Z" fill="#fff"/>')}
${svg(16, 15, '<path d="M3 0v4M6 0v4M1.500 4h6v3h-6zM4.500 7v8" stroke="#fff" fill="none" stroke-width="1.300"/><path d="M9 2.500h5.500v11.500H9zM10.500.8h2.500" stroke="#fff" fill="none" stroke-width="1.500"/>')}
${svg(16, 13, '<path d="M1 13v-2h2v2Zm3 0V9.500h2V13Zm3 0V7h2v6Zm3 0V4h2v9Zm3 0V1h2v12Z" fill="#fff"/>')}
${svg(16, 14, '<path d="M0 5h3l4-4v12L3 9H0Z" fill="#fff"/><path d="M9 5q1.500 2 0 4M11 3q3 4 0 8M13 1.500q4.500 5.500 0 11" stroke="#ddd" fill="none"/>')}
<div class="c"><div>23:01</div><div>26/05/2015</div></div></div>`);

define('unity-editor', `:host{display:flex;flex-direction:column;height:100vh;min-height:500px;background:#a2a2a2}
.main{flex:1;min-height:0;display:grid;grid-template-columns:minmax(0,1fr) 276px;column-gap:2px}
.left{display:grid;grid-template-rows:minmax(0,364fr) minmax(0,268fr);min-height:0}
.top{display:grid;grid-template-columns:241px minmax(0,1fr);column-gap:3px;padding-bottom:4px;min-height:0}
title-bar,menu-bar,tool-bar,status-bar,task-bar{flex:none}`,
`<title-bar></title-bar><menu-bar></menu-bar><tool-bar></tool-bar>
<div class="main"><div class="left"><div class="top"><hierarchy-panel></hierarchy-panel><scene-panel></scene-panel></div><project-panel></project-panel></div><inspector-panel></inspector-panel></div>
<status-bar></status-bar><task-bar></task-bar>`);
</script>
</body>
</html>
